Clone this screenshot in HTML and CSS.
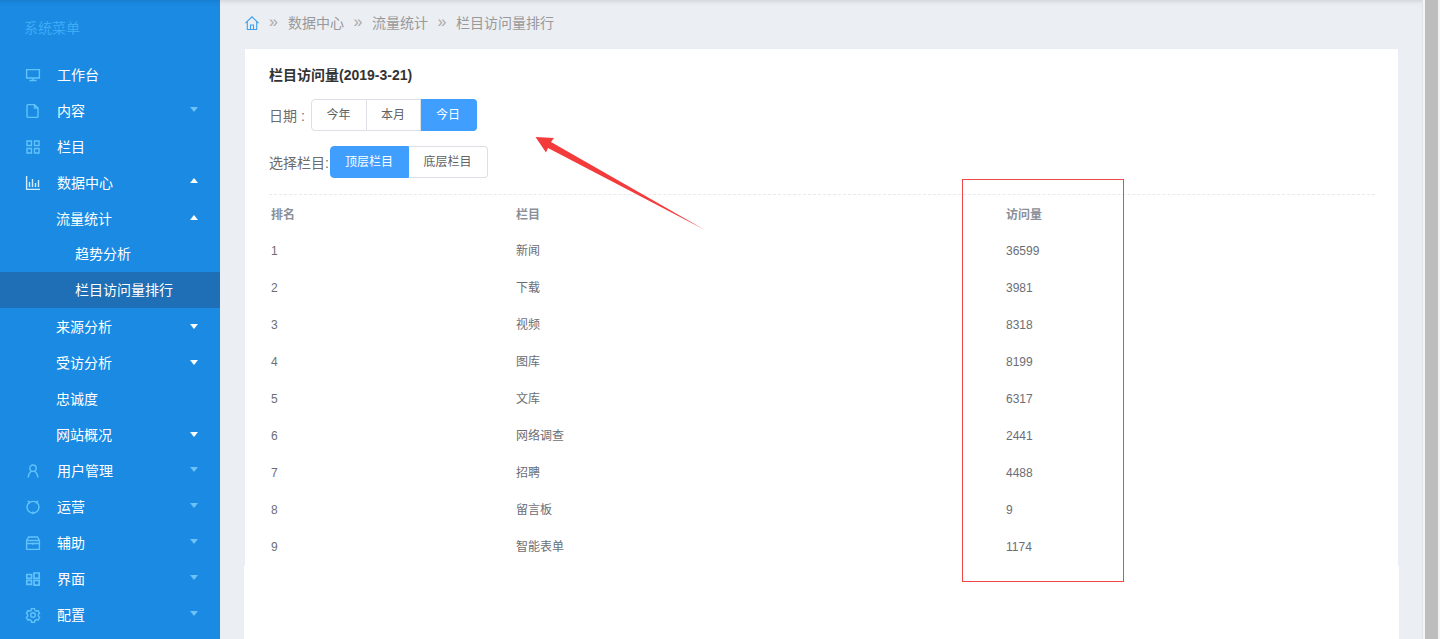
FILE: index.html
```html
<!DOCTYPE html>
<html lang="zh-CN">
<head>
<meta charset="utf-8">
<title>栏目访问量排行</title>
<link rel="stylesheet" href="styles.css">
</head>
<body>
<div class="app">
  <aside class="sidebar">
    <div class="side-title">系统菜单</div>
    <nav>
      <a class="item">
        <svg class="ico" viewBox="0 0 14 14"><path d="M.6 1.600h12.800v8.400H.6zM7 10v2.500M3.500 12.500h7" /></svg>
        <span>工作台</span>
      </a>
      <a class="item">
        <svg class="ico" viewBox="0 0 14 14"><path d="M2 .6h6.500l3.500 3.500v8.300c0 .6-.4 1-1 1H2c-.6 0-1-.4-1-1V1.600c0-.6.4-1 1-1zM8.500.6v3.500H12" /></svg>
        <span>内容</span><i class="caret"></i>
      </a>
      <a class="item">
        <svg class="ico" viewBox="0 0 14 14"><path d="M1 1h4.500v4.500H1zM8.500 1H13v4.500H8.500zM1 8.500h4.500V13H1zM8.500 8.500H13V13H8.500z" /></svg>
        <span>栏目</span>
      </a>
      <a class="item">
        <svg class="ico ico-strong" viewBox="0 0 14 14"><path d="M.6 0v13.400H14M3.500 6v5M6.500 3v8M9.500 7v4M12.500 4v7" /></svg>
        <span>数据中心</span><i class="caret up"></i>
      </a>
      <a class="item sub">流量统计<i class="caret up up-sub"></i></a>
      <div class="third-group">
        <a class="item third">趋势分析</a>
        <a class="item third active">栏目访问量排行</a>
      </div>
      <a class="item sub">来源分析<i class="caret down-white"></i></a>
      <a class="item sub">受访分析<i class="caret down-white"></i></a>
      <a class="item sub">忠诚度</a>
      <a class="item sub">网站概况<i class="caret down-white"></i></a>
      <a class="item">
        <svg class="ico" viewBox="0 0 14 14"><circle cx="7" cy="4.200" r="3.200" /><path d="M2.200 13.500c0-3 1.400-5 3-6M11.800 13.500c0-3-1.400-5-3-6" /></svg>
        <span>用户管理</span><i class="caret"></i>
      </a>
      <a class="item">
        <svg class="ico" viewBox="0 0 14 14"><path d="M3.500 2.400C2 3.400 1 5 1 7c0 3.300 2.700 6 6 6s6-2.700 6-6c0-2-1-3.600-2.500-4.600C8.500 1.200 5.500 1.200 3.500 2.400z" /><path d="M1.800.8l2.500 2.400M12.200.8L9.700 3.200M7 11.500v2.800" /></svg>
        <span>运营</span><i class="caret"></i>
      </a>
      <a class="item">
        <svg class="ico" viewBox="0 0 14 14"><path d="M.6 4.500h12.800v8.900H.6zM.6 4.500L2.500 1h9l1.900 3.500M.6 7.500h12.800M7 6.500v2.200" /></svg>
        <span>辅助</span><i class="caret"></i>
      </a>
      <a class="item">
        <svg class="ico ico-bold" viewBox="0 0 14 14"><path d="M.8 2.500h4.700v3.800H.8zM.8 8.500h4.700v3.800H.8zM8 1h5.200v5.300H8zM8 8.500h5.200v4.700H8z" /></svg>
        <span>界面</span><i class="caret"></i>
      </a>
      <a class="item">
        <svg class="ico" viewBox="0 0 14 14"><circle cx="7" cy="7" r="2.300" /><path d="M5.500.6h3l.4 1.700 1.500.9 1.700-.5 1.500 2.600-1.300 1.200v1.800l1.300 1.200-1.500 2.600-1.700-.5-1.500.9-.4 1.700h-3l-.4-1.700-1.500-.9-1.700.5L.4 9.500l1.300-1.200V6.500L.4 5.300 1.900 2.700l1.700.5 1.500-.9z" /></svg>
        <span>配置</span><i class="caret"></i>
      </a>
    </nav>
  </aside>

  <main class="main">
    <div class="crumbs">
      <svg class="home" viewBox="0 0 14 14"><path d="M.4 7.200L7 .8l6.600 6.400M2.300 5.500v8h9.400v-8M5.500 13.500V9h3v4.500" /></svg>
      <span class="sep first">»</span><span>数据中心</span>
      <span class="sep">»</span><span>流量统计</span>
      <span class="sep">»</span><span>栏目访问量排行</span>
    </div>
    <section class="card">
      <h2 class="card-title">栏目访问量(2019-3-21)</h2>
      <div class="filter filter-date">
        <span class="label">日期 :</span>
        <div class="btn-group">
          <button class="btn w56">今年</button>
          <button class="btn w54">本月</button>
          <button class="btn w56 on">今日</button>
        </div>
      </div>
      <div class="filter filter-col">
        <span class="label label-fixed">选择栏目:</span>
        <div class="btn-group">
          <button class="btn w79 on">顶层栏目</button>
          <button class="btn w79">底层栏目</button>
        </div>
      </div>
      <table class="rank">
        <thead>
          <tr><th class="c1">排名</th><th class="c2">栏目</th><th>访问量</th></tr>
        </thead>
        <tbody>
          <tr><td>1</td><td>新闻</td><td>36599</td></tr>
          <tr><td>2</td><td>下载</td><td>3981</td></tr>
          <tr><td>3</td><td>视频</td><td>8318</td></tr>
          <tr><td>4</td><td>图库</td><td>8199</td></tr>
          <tr><td>5</td><td>文库</td><td>6317</td></tr>
          <tr><td>6</td><td>网络调查</td><td>2441</td></tr>
          <tr><td>7</td><td>招聘</td><td>4488</td></tr>
          <tr><td>8</td><td>留言板</td><td>9</td></tr>
          <tr><td>9</td><td>智能表单</td><td>1174</td></tr>
        </tbody>
      </table>
    </section>
    <div class="card-tail"></div>
  </main>

  <div class="rail"><div class="rail-bar"></div></div>
</div>

<div class="red-box"></div>
<svg class="arrow" viewBox="0 0 180 102" width="180" height="102"><polygon points="5.500,7 24,8 21,12 175,100 18,18 16,22.500" /></svg>
</body>
</html>
```
FILE: styles.css
```css
* { box-sizing: border-box; }
html, body { margin: 0; height: 100%; overflow: hidden; }
body {
  font-family: "Liberation Sans", "Noto Sans CJK SC", sans-serif;
  font-size: 14px;
  background: #fff;
  position: relative;
}
.app { display: flex; width: 1440px; height: 639px; }

/* Sidebar */
.sidebar {
  width: 220px;
  flex: none;
  background: #1a8ae3;
  color: #fff;
  box-shadow: inset 0 5px 5px -4px rgba(0, 0, 0, .12);
}
.side-title { height: 57px; line-height: 57px; padding-left: 24px; color: #3fabf6; font-size: 14px; }
.item {
  display: flex;
  align-items: center;
  height: 36px;
  padding-left: 26px;
  padding-right: 22px;
  padding-bottom: 2px;
}
.ico {
  width: 14px;
  height: 14px;
  margin-top: 2px;
  margin-right: 17px;
  flex: none;
  fill: none;
  stroke: #62c3fa;
  stroke-width: 1.4;
  overflow: visible;
}
.ico-strong { stroke: #d2eefe; }
.ico-bold { stroke-width: 1.7; }
.sub { padding-left: 56px; }
.third-group { margin-top: -1px; margin-bottom: 1px; }
.third { padding-left: 75px; }
.active { background: #1e6fb6; }
.caret {
  margin-left: auto;
  margin-bottom: 2px;
  width: 0;
  height: 0;
  border-left: 4px solid transparent;
  border-right: 4px solid transparent;
  border-top: 5px solid #6cc1f5;
}
.caret.up { border-top: 0; border-bottom: 5px solid #fff; margin-bottom: 3px; }
.caret.up-sub { margin-bottom: 1px; }
.caret.down-white { border-top-color: #fff; margin-bottom: 0; }

/* Main */
.main {
  width: 1203px;
  flex: none;
  background: #ebeef3;
  padding: 0 0 0 24px;
  box-shadow: inset 0 5px 5px -4px rgba(0, 0, 0, .14);
  border-right: 1px solid #e0e3e8;
}
.crumbs {
  height: 48px;
  padding-bottom: 5px;
  display: flex;
  align-items: center;
  color: #999;
  font-size: 14px;
  padding-left: 1px;
}
.home { width: 14px; height: 14px; margin-top: 2px; fill: none; stroke: #3fa0ea; stroke-width: 1.1; overflow: visible; }
.sep { width: 28px; text-align: center; font-size: 16px; color: #aaa; line-height: 14px; padding-top: 1px; }
.sep.first { width: 29px; }

.card {
  width: 1155px;
  height: 518px;
  background: #fff;
  border: 1px solid #e8edf6;
  border-bottom: 0;
  padding: 16px 23px 0 24px;
}
.card-tail { width: 1155px; height: 73px; background: #fff; }
.card-title { margin: 0; height: 20px; line-height: 20px; font-size: 14px; font-weight: bold; color: #333; }
.filter { display: flex; align-items: center; color: #6c6c6c; font-size: 14px; }
.filter-date { margin-top: 14px; }
.filter-col { margin-top: 15px; }
.label { display: block; white-space: nowrap; }
.filter-date .label { width: 42px; }
.label-fixed { width: 61px; overflow: hidden; }
.btn-group { display: flex; height: 32px; }
.btn {
  height: 32px;
  padding: 0 1px 3px 0;
  margin: 0;
  background: #fff;
  border: 1px solid #dcdfe6;
  border-left-width: 0;
  color: #606266;
  font: 12px "Liberation Sans", "Noto Sans CJK SC", sans-serif;
}
.btn:first-child { border-left-width: 1px; border-radius: 4px 0 0 4px; }
.btn:last-child { border-radius: 0 4px 4px 0; }
.btn.on { background: #409eff; border-color: #409eff; color: #fff; }
.w56 { width: 56px; }
.w54 { width: 54px; }
.w79 { width: 79px; }

.rank {
  width: 1106px;
  margin-top: 16px;
  border-top: 1px dashed #e6e9ee;
  border-collapse: separate;
  border-spacing: 0;
  table-layout: fixed;
  font-size: 12px;
  color: #6b6e75;
}
.rank th, .rank td { height: 37px; padding: 0 0 0 2px; text-align: left; vertical-align: middle; }
.rank th { color: #8a8f99; font-weight: bold; padding-bottom: 1px; }
.rank td:nth-child(2) { padding-bottom: 2px; }
.c1 { width: 245px; }
.c2 { width: 490px; }

/* Scrollbar strip */
.rail {
  width: 17px;
  height: 639px;
  flex: none;
  background: #f4f4f4;
  padding: 0 2px;
}
.rail-bar { width: 13px; height: 639px; background: #bdbdbd; }

/* Annotations drawn over the page */
.red-box {
  position: absolute;
  left: 962px;
  top: 179px;
  width: 162px;
  height: 403px;
  border: 1px solid #f04848;
}
.arrow { position: absolute; left: 530px; top: 130px; fill: #f43b3b; }
```
